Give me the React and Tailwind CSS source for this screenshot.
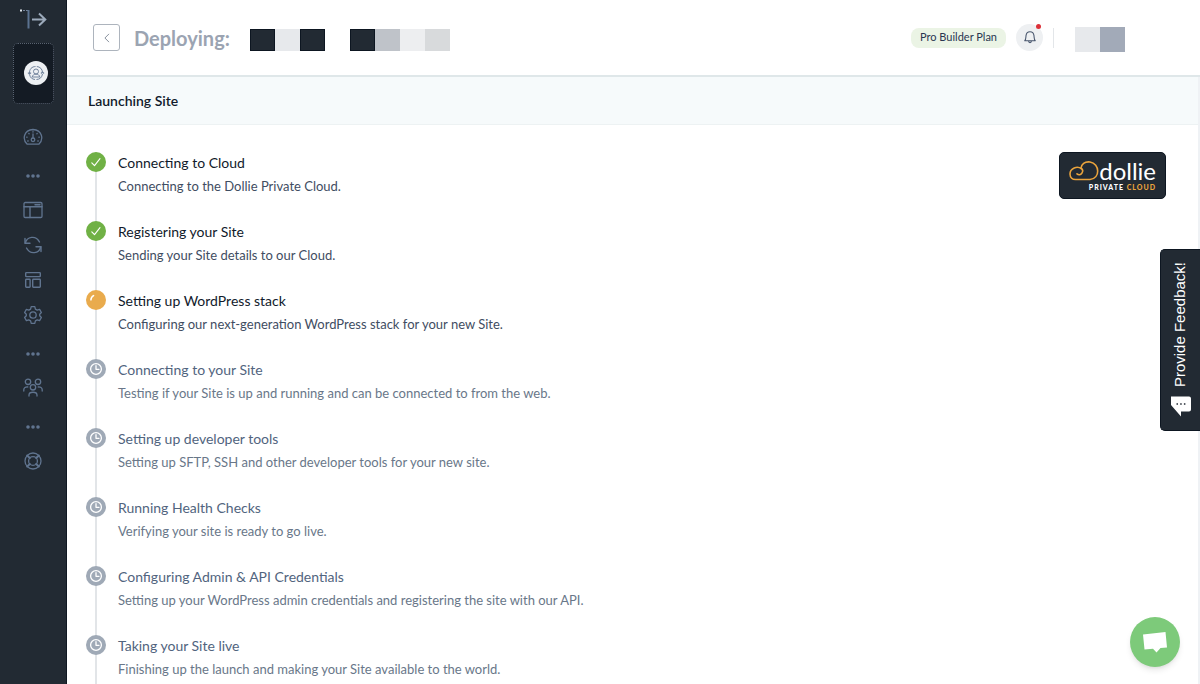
const steps = [
  { title: "Connecting to Cloud", text: "Connecting to the Dollie Private Cloud.", status: "done" },
  { title: "Registering your Site", text: "Sending your Site details to our Cloud.", status: "done" },
  { title: "Setting up WordPress stack", text: "Configuring our next-generation WordPress stack for your new Site.", status: "active" },
  { title: "Connecting to your Site", text: "Testing if your Site is up and running and can be connected to from the web.", status: "waiting" },
  { title: "Setting up developer tools", text: "Setting up SFTP, SSH and other developer tools for your new site.", status: "waiting" },
  { title: "Running Health Checks", text: "Verifying your site is ready to go live.", status: "waiting" },
  { title: "Configuring Admin & API Credentials", text: "Setting up your WordPress admin credentials and registering the site with our API.", status: "waiting" },
  { title: "Taking your Site live", text: "Finishing up the launch and making your Site available to the world.", status: "waiting" },
];

const circleColor = {
  done: "bg-[#70b145]",
  active: "bg-[#e9ab4d]",
  waiting: "bg-[#9fa9b6]",
};

function Icon({ children, size = 20 }) {
  return (
    <svg width={size} height={size} viewBox="0 0 20 20" fill="none" stroke="currentColor" strokeWidth="1.3" strokeLinecap="round" strokeLinejoin="round" aria-hidden="true">
      {children}
    </svg>
  );
}

function StepIcon({ status }) {
  return (
    <span className={`relative flex size-5 shrink-0 items-center justify-center rounded-full text-white ${circleColor[status]}`}>
      <Icon>
        {status === "done" && <path d="M5.8 10.8 8.5 13.6 14 6.6" strokeWidth="1.1" />}
        {status === "active" && <path d="M4.9 9.9C5 8 6 6.4 7.6 5.6" strokeWidth="1.5" />}
        {status === "waiting" && (
          <>
            <circle cx="10" cy="10" r="5.4" />
            <path d="M10 6.7V10.3H13" />
          </>
        )}
      </Icon>
    </span>
  );
}

function Dots() {
  return (
    <svg className="mt-5 mb-[14px]" width="14" height="4" viewBox="0 0 14 4" fill="#60748f" aria-hidden="true">
      <circle cx="2" cy="2" r="1.8" />
      <circle cx="7" cy="2" r="1.8" />
      <circle cx="12" cy="2" r="1.8" />
    </svg>
  );
}

function NavLink({ label, children }) {
  return (
    <a href="#" aria-label={label} className="flex h-[35px] items-center text-[#60748f]">
      <Icon>{children}</Icon>
    </a>
  );
}

function Sidebar() {
  return (
    <aside className="flex w-[67px] shrink-0 flex-col items-center border-r border-[#0f1722] bg-[#222a33]">
      <button aria-label="Expand menu" className="mt-2 mb-3 h-[23px] text-[#9caabb]">
        <svg width="28" height="23" viewBox="0 0 28 23" fill="none" aria-hidden="true">
          <path d="M1 2.5H9" stroke="#77859a" strokeWidth="1" strokeDasharray="2 1" />
          <rect x="1" y="1.5" width="2" height="2" fill="#dfe5ec" />
          <path d="M9.5 2V20.5" stroke="#5b7291" strokeWidth="2" />
          <path d="M13 11.5H26M20 5.5L26.3 11.5L20 17.5" stroke="currentColor" strokeWidth="2" />
        </svg>
      </button>
      <a href="#" aria-label="Account" className="flex h-[61px] w-[41px] items-center justify-center rounded-[5px] border border-dotted border-[#586270] bg-[#141b24] pb-0.5 pl-1.5">
        <span className="flex size-6 items-center justify-center rounded-full bg-[#edf0f3] text-[#71839c]">
          <svg width="18" height="18" viewBox="0 0 18 18" fill="none" stroke="currentColor" strokeWidth="1" aria-hidden="true">
            <circle cx="9" cy="7.5" r="2.5" />
            <path d="M5.2 13C5.6 9.2 12.4 9.2 12.8 13Z" />
            <path d="M2.5 9.5C2.2 5 5 2.6 8.5 2.5M9.8 2.5C13 2.8 15.4 5 15.5 8.5M15.5 10C15 13.5 12.5 15.5 9.5 15.5M8 15.5C5 15.2 3.2 13.5 2.7 11" />
            <path d="M1 8.7 2.5 10.2 4 8.7M14 9.5 15.5 8 17 9.5" strokeWidth="1.2" />
          </svg>
        </span>
      </a>
      <nav className="mt-[15px] flex flex-col items-center">
        <NavLink label="Dashboard">
          <path d="M4.2 17.2C-1 12.5.7 3 10 2.5C19.3 3 21 12.5 15.8 17.2Z" />
          <circle cx="10" cy="12.8" r="1.8" />
          <path d="M10 11V7M10 4.6V5M5.8 6.4 6.1 6.7M14.2 6.4 13.9 6.7M3.7 10.2H4.1M15.9 10.2H16.3M4.7 14H5.2M14.8 14H15.3" />
        </NavLink>
        <Dots />
        <NavLink label="Sites">
          <rect x="1" y="2.5" width="18" height="15" rx="1.2" />
          <path d="M1 6.8H19M7 6.8V17.5M12 4.7H17" strokeWidth="1.4" />
        </NavLink>
        <NavLink label="Updates">
          <path d="M2.3 8.2C3.8 1.5 12.8-.1 16.5 7M17.7 11.8C16.2 18.5 7.2 20.1 3.5 13" strokeWidth="1.4" />
          <path d="M2 3.5V8.3H7M18 16.5V11.7H13" strokeWidth="1.4" />
        </NavLink>
        <NavLink label="Blueprints">
          <rect x="2.7" y="2.6" width="14.6" height="4" rx=".7" strokeWidth="1.4" />
          <rect x="2.7" y="9.3" width="4.4" height="8" rx=".7" strokeWidth="1.4" />
          <rect x="9.7" y="9.3" width="7.6" height="8" rx=".7" strokeWidth="1.4" />
        </NavLink>
        <NavLink label="Settings">
          <path d="M8.2 1.7H11.8L12.4 4.1L14.2 5.1L16.6 4.4L18.4 7.5L16.7 9.3V10.7L18.4 12.5L16.6 15.6L14.2 14.9L12.4 15.9L11.8 18.3H8.2L7.6 15.9L5.8 14.9L3.4 15.6L1.6 12.5L3.3 10.7V9.3L1.6 7.5L3.4 4.4L5.8 5.1L7.6 4.1Z" />
          <circle cx="10" cy="10" r="3.2" />
        </NavLink>
        <Dots />
        <NavLink label="Customers">
          <circle cx="5" cy="3.8" r="2.7" />
          <circle cx="15" cy="3.8" r="2.7" />
          <circle cx="10" cy="9.3" r="2.7" />
          <path d="M.8 13V11.7C.8 9.7 2.5 8.8 4.8 9M19.2 13V11.7C19.2 9.7 17.5 8.8 15.2 9M6 18V17C6 13.3 14 13.3 14 17V18" />
        </NavLink>
        <Dots />
        <NavLink label="Support">
          <circle cx="10" cy="10" r="8" />
          <circle cx="10" cy="10" r="4.4" />
          <path d="M4.2 4.5 6.8 7M15.8 4.5 13.2 7M4.2 15.5 6.8 13M15.8 15.5 13.2 13" strokeWidth="2" />
        </NavLink>
      </nav>
    </aside>
  );
}

function Header() {
  return (
    <header className="flex h-[77px] shrink-0 items-center border-b-2 border-[#dfe7e9] pr-[75px] pl-[26px]">
      <button aria-label="Back" className="flex size-[27px] items-center justify-center rounded-[3px] border border-[#adb4bd] text-[#7d8794]">
        <Icon size={14}>
          <path d="M12.5 4.5 7 10L12.5 15.5" />
        </Icon>
      </button>
      <h1 className="ml-[14px] text-[20px] font-bold text-[#9ba4b2]">Deploying:</h1>
      <div className="mt-[5px] ml-5 flex h-[22px]">
        <span className="w-[25px] border border-[#0d1621] bg-[#222a33]" />
        <span className="w-[25px] bg-[#e7e9ec]" />
        <span className="w-[25px] border border-[#0d1621] bg-[#222a33]" />
        <span className="ml-[25px] w-[25px] border border-[#0d1621] bg-[#222a33]" />
        <span className="w-[25px] bg-[#bfc3c9]" />
        <span className="w-[25px] bg-[#edeef0]" />
        <span className="w-[25px] bg-[#d8dadc]" />
      </div>
      <div className="ml-auto flex items-center">
        <span className="flex h-5 items-center rounded-lg bg-[#ebf4e5] px-[9px] text-[11px] text-[#293651]">Pro Builder Plan</span>
        <button aria-label="Notifications" className="relative ml-[10px] flex size-[27px] items-center justify-center rounded-full bg-[#eef0f2] pb-0.5 text-[#48566d]">
          <Icon size={14}>
            <path d="M2.5 15.3C4.3 13.7 4 11 4.3 8C4.7 4.7 6.8 2.4 10 2.4S15.3 4.7 15.7 8C16 11 15.7 13.7 17.5 15.3ZM8 15.8C8 18.8 12 18.8 12 15.8" strokeWidth="1.5" />
          </Icon>
          <span className="absolute top-0 right-0.5 size-[5px] rounded-full bg-[#dc3038]" />
        </button>
        <span className="ml-[10px] h-5 w-px bg-[#e3e6e9]" />
        <div className="mt-[3px] ml-[21px] flex h-[25px]">
          <span className="w-[25px] bg-[#e7e9ec]" />
          <span className="w-[25px] bg-[#a2aab8]" />
        </div>
      </div>
    </header>
  );
}

function DollieLogo() {
  return (
    <div className="flex h-[47px] w-[107px] shrink-0 flex-col items-end rounded-[5px] border border-[#0d1621] bg-[#222a33] pt-[7px] pr-[9px]">
      <div className="flex h-[22px] items-center">
        <svg width="30" height="22" viewBox="0 0 30 22" fill="none" stroke="#eba43c" strokeWidth="1.6" strokeLinecap="round" aria-hidden="true">
          <path d="M12.5 8.8C8.4 5.5 1 8 1 14C1 17.5 3.5 19.5 6.5 19.5H21C31.5 18.5 31 3.5 21 2C15.5 1.3 12.5 4.5 12 8C16 11 11.5 17 8 13.8" />
        </svg>
        <span className="text-[24px] leading-[22px] text-white">dollie</span>
      </div>
      <p className="text-[7px] leading-[10px] font-black tracking-[1px] whitespace-nowrap text-white">
        PRIVATE <span className="text-[#eba43c]">CLOUD</span>
      </p>
    </div>
  );
}

export default function App() {
  return (
    <div className="flex h-screen overflow-hidden bg-white font-['Lato',sans-serif] text-[#111a2b]">
      <Sidebar />
      <div className="flex min-w-0 flex-1 flex-col">
        <Header />
        <main className="min-h-0 flex-1 overflow-hidden border-r-2 border-[#eff2f5]">
          <h2 className="flex h-12 items-center border-b border-[#edf2f3] bg-[#f6fafb] px-[21px] text-[14px] font-semibold">Launching Site</h2>
          <div className="flex items-start justify-between pt-[27px] pr-8 pl-[19px]">
            <ol>
              {steps.map((step) => (
                <li key={step.title} className="relative flex h-[69px] gap-3">
                  <span className="absolute top-0 left-[9px] h-full w-0.5 bg-[#e2e5e8]" />
                  <StepIcon status={step.status} />
                  <div className={step.status === "waiting" ? "text-[#51647e]" : "text-[#111a2b]"}>
                    <h3 className="text-[14px] leading-[22px]">{step.title}</h3>
                    <p className={step.status === "waiting" ? "text-[13px] leading-6 text-[#697789]" : "text-[13px] leading-6 text-[#3f4d62]"}>{step.text}</p>
                  </div>
                </li>
              ))}
            </ol>
            <DollieLogo />
          </div>
        </main>
      </div>

      <button className="fixed top-[249px] right-0 flex h-[182px] w-10 flex-col items-center justify-end gap-2 rounded-l-[5px] border border-r-0 border-[#0d1621] bg-[#222a33] pb-[13px] font-['Liberation_Sans',sans-serif] text-[15px] text-white">
        <span className="rotate-180 [writing-mode:vertical-rl]">Provide Feedback!</span>
        <svg width="22" height="22" viewBox="0 0 22 22" aria-hidden="true">
          <path d="M1 1.5H19Q21 1.5 21 3.5V14.5Q21 16.5 19 16.5H11V21.5L1 10Z" fill="white" />
          <path d="M6.5 9H8M10.2 9H11.7M13.9 9H15.4" stroke="#222a33" strokeWidth="1.5" />
        </svg>
      </button>

      <button aria-label="Open chat" className="fixed right-5 bottom-[17px] flex size-[50px] items-center justify-center rounded-full bg-[#7dca7a] shadow-md">
        <svg width="26" height="22" viewBox="0 0 26 22" aria-hidden="true">
          <path d="M1 3.5 23.5 1 25 16.5 18.5 17 14.5 21.5 11 17.8 2.5 18.5Z" fill="white" />
        </svg>
      </button>
    </div>
  );
}
